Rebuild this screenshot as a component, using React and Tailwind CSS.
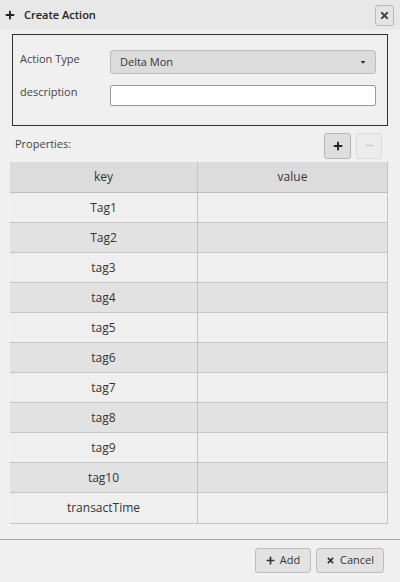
import React from "react";
import { FaPlus, FaTimes, FaMinus, FaCaretDown } from "react-icons/fa";

const rows = ["Tag1", "Tag2", "tag3", "tag4", "tag5", "tag6", "tag7", "tag8", "tag9", "tag10", "transactTime"];

export default function App() {
  return (
    <div className="w-[400px] h-[582px] bg-[#f0f0f0] flex flex-col text-[#333] overflow-hidden" style={{ fontFamily: '"Open Sans", "Noto Sans", sans-serif' }}>
      <div className="h-[30px] bg-[#e8e8e8] flex items-center pl-[5px] pr-[6px]">
        <FaPlus className="w-[10px] h-[10px] text-[#222]" />
        <span className="ml-[9px] text-[11px] font-semibold text-[#222]">Create Action</span>
        <div className="ml-auto w-[19px] h-[21px] border border-[#b8b8b8] rounded-[3px] bg-[#e4e4e4] flex items-center justify-center">
          <FaTimes className="w-[11px] h-[11px] text-[#444]" />
        </div>
      </div>
      <div className="mt-[4px] mx-[12px] h-[92px] border border-[#333] pt-[15px] pl-[7px] pr-[11px] flex flex-col gap-[11px]">
        <div className="flex items-center h-[24px]">
          <span className="w-[90px] text-[11px] text-[#444] -mt-[6px]">Action Type</span>
          <div className="flex-1 h-[24px] bg-[#dcdcdc] border border-[#bdbdbd] rounded-[3px] flex items-center pl-[9px] pr-[8px]">
            <span className="text-[11px] text-[#333]">Delta Mon</span>
            <FaCaretDown className="ml-auto w-[8px] h-[8px] text-[#333]" />
          </div>
        </div>
        <div className="flex items-center h-[21px]">
          <span className="w-[90px] text-[11px] text-[#444] -mt-[6px]">description</span>
          <div className="flex-1 h-[21px] bg-white border border-[#999] rounded-[2px]" />
        </div>
      </div>
      <div className="h-[36px] flex items-center pl-[15px] pr-[18px] mt-[0px]">
        <span className="text-[11px] text-[#444]">Properties:</span>
        <div className="ml-auto flex gap-[5px] mt-[3px]">
          <div className="w-[27px] h-[26px] bg-[#dedede] border border-[#b5b5b5] rounded-[3px] flex items-center justify-center">
            <FaPlus className="w-[10px] h-[10px] text-[#222]" />
          </div>
          <div className="w-[26px] h-[26px] bg-[#ececec] border border-[#dadada] rounded-[3px] flex items-center justify-center">
            <FaMinus className="w-[9px] h-[9px] text-[#c8c8c8]" />
          </div>
        </div>
      </div>
      <div className="mx-[10px] w-[378px] border-r border-b border-[#c4c4c4] text-[12px]">
        <div className="flex h-[31px] bg-[#dcdcdc] border-b border-[#bdbdbd]">
          <div className="w-[188px] border-r border-[#c4c4c4] flex items-center justify-center">key</div>
          <div className="flex-1 flex items-center justify-center">value</div>
        </div>
        {rows.map((r, i) => (
          <div key={r} className={`flex h-[30px] border-b border-[#c4c4c4] last:border-b-0 ${i % 2 === 0 ? "bg-[#efefef]" : "bg-[#e2e2e2]"}`}>
            <div className="w-[188px] border-r border-[#c4c4c4] flex items-center justify-center">{r}</div>
            <div className="flex-1" />
          </div>
        ))}
      </div>
      <div className="mt-[15px] border-t border-[#a8a8a8] flex justify-end gap-[5px] pr-[16px] pt-[8px]">
        <div className="w-[56px] h-[25px] bg-[#e2e2e2] border border-[#bdbdbd] rounded-[3px] flex items-center justify-center gap-[5px] text-[11px]">
          <FaPlus className="w-[9px] h-[9px] text-[#333]" />
          <span>Add</span>
        </div>
        <div className="w-[68px] h-[25px] bg-[#e2e2e2] border border-[#bdbdbd] rounded-[3px] flex items-center justify-center gap-[5px] text-[11px]">
          <FaTimes className="w-[9px] h-[9px] text-[#333]" />
          <span>Cancel</span>
        </div>
      </div>
    </div>
  );
}
